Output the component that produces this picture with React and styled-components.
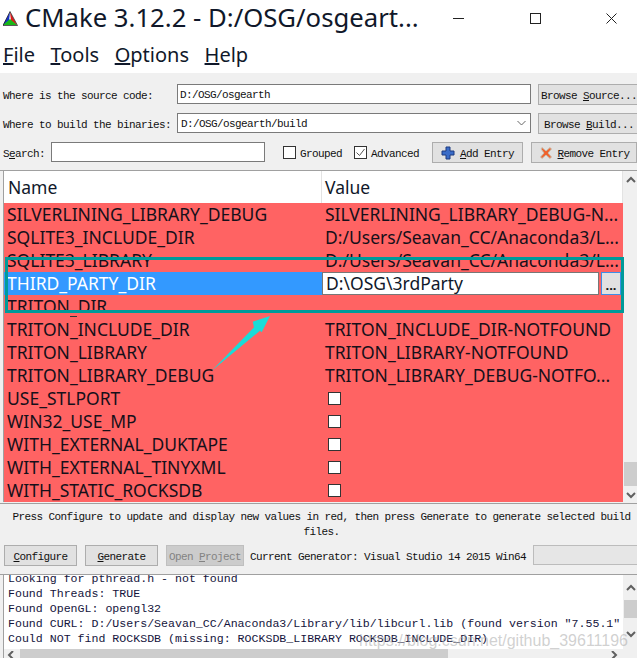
import React from 'react';
import styled, { createGlobalStyle } from 'styled-components';

const GlobalStyle = createGlobalStyle`
  html, body {
    margin: 0;
    padding: 0;
    background: #fff;
  }
  * { box-sizing: border-box; }
`;

const mono = '"Liberation Mono", "DejaVu Sans Mono", monospace';
const ui = '"Noto Sans", "Open Sans", sans-serif';
const RED = '#ff6363';

const Window = styled.div`
  position: relative;
  width: 637px;
  height: 658px;
  overflow: hidden;
  display: flex;
  flex-direction: column;
  background: #fff;
  font-family: ${mono};
  font-size: 11px;
  letter-spacing: -0.6px;
  color: #111;
  u { text-underline-offset: 1px; }
`;

const TitleBar = styled.div`
  height: 36px;
  display: flex;
  align-items: center;
  padding-left: 3px;
  flex-shrink: 0;
`;
const Title = styled.div`
  font-family: ${ui};
  font-size: 25.7px;
  letter-spacing: 0;
  line-height: 36px;
  margin-left: 7px;
  white-space: nowrap;
  color: #10182a;
`;
const Controls = styled.div`
  display: flex;
  margin-left: auto;
  margin-right: -13px;
  flex-shrink: 0;
`;
const Control = styled.div`
  width: 76.5px;
  height: 36px;
  display: flex;
  align-items: center;
  justify-content: center;
`;

const MenuBar = styled.div`
  height: 37px;
  display: flex;
  gap: 15.5px;
  padding: 0 0 0 3px;
  align-items: center;
  font-family: ${ui};
  font-size: 20px;
  letter-spacing: 0;
  color: #10182a;
  flex-shrink: 0;
`;

const TopPanel = styled.div`
  height: 97px;
  padding: 11px 0 0 3px;
  display: flex;
  flex-direction: column;
  gap: 9px;
  background: #f0f0f0;
  flex-shrink: 0;
`;
const Row = styled.div`
  display: flex;
  align-items: flex-start;
  height: 20px;
  width: 700px;
`;
const Label = styled.div`
  width: ${p => p.$w}px;
  padding-top: 2px;
  line-height: 20px;
  white-space: nowrap;
  flex-shrink: 0;
`;
const PathInput = styled.div`
  width: ${p => p.$w}px;
  height: 20px;
  background: #fff;
  border: 1px solid #7a7a7a;
  padding: 0 0 0 ${p => p.$pl || 2}px;
  line-height: 20px;
  position: relative;
  flex-shrink: 0;
`;
const Chevron = styled.svg`
  display: block;
  flex-shrink: 0;
`;
const ComboArrow = styled.div`
  position: absolute;
  right: 4px;
  top: 6px;
`;
const Button = styled.div`
  width: ${p => p.$w}px;
  height: 21px;
  margin-left: ${p => p.$ml || 0}px;
  background: ${p => (p.$disabled ? '#cccccc' : '#e1e1e1')};
  border: 1px solid ${p => (p.$disabled ? '#bfbfbf' : '#adadad')};
  color: ${p => (p.$disabled ? '#838383' : '#111')};
  display: flex;
  align-items: center;
  justify-content: center;
  gap: 5px;
  white-space: nowrap;
  flex-shrink: 0;
`;
const ButtonText = styled.span`
  padding-top: 3px;
`;
const CheckLabel = styled.div`
  display: flex;
  align-items: center;
  gap: 4px;
  height: 20px;
  margin-left: ${p => p.$ml}px;
  flex-shrink: 0;
`;
const Box = styled.div`
  width: 13px;
  height: 13px;
  background: #fff;
  border: 1px solid #333;
  display: flex;
  align-items: center;
  justify-content: center;
  flex-shrink: 0;
`;
const RowBox = styled(Box)`
  margin-left: 3px;
`;

const Table = styled.div`
  height: 334px;
  display: flex;
  background: #f0f0f0;
  border-top: 1px solid #a0a0a0;
  border-bottom: 1px solid #a0a0a0;
  flex-shrink: 0;
`;
const TableMain = styled.div`
  width: 620px;
  margin-left: 3px;
  border-left: 1px solid #a0a0a0;
  font-family: ${ui};
  font-size: 17.5px;
  letter-spacing: 0;
  color: #16101a;
  background: #fff;
  height: 331px;
`;
const Header = styled.div`
  height: 32px;
  display: grid;
  grid-template-columns: 318px 1fr;
  line-height: 32px;
  color: #10182a;
`;
const HeadCell = styled.div`
  padding-left: ${p => p.$pl}px;
  border-right: 1px solid #e3e3e3;
`;
const Rows = styled.div`
  background: ${RED};
  height: 299px;
`;
const TableRow = styled.div`
  position: relative;
  height: 23px;
  display: grid;
  grid-template-columns: 318px 1fr;
  line-height: 23px;
  background: ${p => (p.$selected ? 'linear-gradient(90deg, #3399ff 318px, transparent 318px)' : 'transparent')};
  color: ${p => (p.$selected ? '#fff' : 'inherit')};
`;
const NameCell = styled.div`
  padding-left: 3px;
  white-space: nowrap;
  overflow: hidden;
  height: ${p => p.$h || 23}px;
`;
const ValueCell = styled.div`
  padding-left: 3px;
  white-space: nowrap;
  overflow: hidden;
  display: flex;
  align-items: center;
`;
const ClippedDash = styled.div`
  position: absolute;
  left: 66px;
  top: 21px;
  width: 7px;
  height: 1px;
  background: #333;
`;
const Editor = styled.div`
  display: flex;
  height: 23px;
`;
const EditorInput = styled.div`
  width: 277px;
  background: #fff;
  border: 1px solid #777;
  padding-left: 3px;
  line-height: 21px;
  color: #10182a;
`;
const EditorButton = styled.div`
  width: 20px;
  margin-left: 2px;
  background: #e1e1e1;
  border: 1px solid #3d8fe8;
  font-size: 13px;
  font-weight: 700;
  line-height: 24px;
  text-align: center;
  color: #111;
`;
const VScroll = styled.div`
  flex: 1;
  margin-left: 1px;
  display: flex;
  flex-direction: column;
  align-items: stretch;
  height: ${p => p.$h}px;
`;
const ArrowCell = styled.div`
  height: ${p => p.$h}px;
  display: flex;
  align-items: center;
  justify-content: center;
  flex-shrink: 0;
`;
const Thumb = styled.div`
  height: ${p => p.$h}px;
  margin-top: auto;
  background: #cdcdcd;
  flex-shrink: 0;
`;

const Message = styled.div`
  height: 41px;
  padding: 6px 0 0 6px;
  text-align: center;
  line-height: 15px;
  background: #f0f0f0;
  flex-shrink: 0;
`;
const ActionBar = styled.div`
  height: 29px;
  display: flex;
  align-items: flex-start;
  padding-left: 4px;
  background: #f0f0f0;
  flex-shrink: 0;
  width: 700px;
`;
const GenLabel = styled.div`
  margin-left: 6px;
  width: 283px;
  padding-top: 2px;
  line-height: 21px;
  white-space: nowrap;
  flex-shrink: 0;
`;
const ProgressBox = styled.div`
  width: 120px;
  height: 20px;
  background: #e6e6e6;
  border: 1px solid #bcbcbc;
  flex-shrink: 0;
`;

const Output = styled.div`
  flex: 1;
  display: flex;
  flex-direction: column;
  background: #f0f0f0;
  border-top: 1px solid #a0a0a0;
  min-height: 0;
`;
const OutputTop = styled.div`
  height: 74px;
  display: flex;
  flex-shrink: 0;
`;
const LogBox = styled.div`
  width: 620px;
  margin-left: 3px;
  border-left: 1px solid #a0a0a0;
  background: #fff;
  overflow: hidden;
  padding-left: 4px;
  font-size: 11.6px;
  letter-spacing: 0;
  line-height: 15px;
  white-space: pre;
  color: #14143c;
`;
const LogLines = styled.div`
  margin-top: -4px;
`;
const HScroll = styled.div`
  height: 9px;
  display: flex;
  margin-left: 3px;
  border-left: 1px solid #a0a0a0;
  align-items: flex-start;
  overflow: hidden;
`;
const HEnd = styled.div`
  width: 16px;
  height: 9px;
  padding-top: 2px;
  display: flex;
  justify-content: center;
  flex-shrink: 0;
  margin-left: ${p => p.$ml || 0}px;
`;
const HThumb = styled.div`
  width: 428px;
  height: 9px;
  background: #cdcdcd;
`;

const Highlight = styled.div`
  position: absolute;
  left: 5px;
  top: 257px;
  width: 619px;
  height: 56px;
  border: 3px solid #009a9a;
  pointer-events: none;
`;
const Pointer = styled.svg`
  position: absolute;
  left: 205px;
  top: 310px;
`;
const Watermark = styled.div`
  position: absolute;
  right: 9px;
  bottom: 8px;
  font-family: "Liberation Sans", sans-serif;
  font-size: 16px;
  letter-spacing: 0;
  color: rgba(170, 170, 170, 0.55);
  white-space: nowrap;
`;

const entries = [
  ['SILVERLINING_LIBRARY_DEBUG', 'SILVERLINING_LIBRARY_DEBUG-N...'],
  ['SQLITE3_INCLUDE_DIR', 'D:/Users/Seavan_CC/Anaconda3/L...'],
  ['SQLITE3_LIBRARY', 'D:/Users/Seavan_CC/Anaconda3/L...'],
  ['THIRD_PARTY_DIR', 'D:\\OSG\\3rdParty', 'edit'],
  ['TRITON_DIR', '', 'clip'],
  ['TRITON_INCLUDE_DIR', 'TRITON_INCLUDE_DIR-NOTFOUND'],
  ['TRITON_LIBRARY', 'TRITON_LIBRARY-NOTFOUND'],
  ['TRITON_LIBRARY_DEBUG', 'TRITON_LIBRARY_DEBUG-NOTFO...'],
  ['USE_STLPORT', null],
  ['WIN32_USE_MP', null],
  ['WITH_EXTERNAL_DUKTAPE', null],
  ['WITH_EXTERNAL_TINYXML', null],
  ['WITH_STATIC_ROCKSDB', null],
];

const logLines = [
  'Looking for pthread.h - not found',
  'Found Threads: TRUE',
  'Found OpenGL: opengl32',
  'Found CURL: D:/Users/Seavan_CC/Anaconda3/Library/lib/libcurl.lib (found version "7.55.1"',
  'Could NOT find ROCKSDB (missing: ROCKSDB_LIBRARY ROCKSDB_INCLUDE_DIR)',
];

const ScrollArrow = ({ dir }) => {
  const points = {
    up: '1,6 5,2 9,6',
    down: '1,2 5,6 9,2',
    left: '6,0 2,4 6,8',
    right: '2,0 6,4 2,8',
  }[dir];
  return (
    <Chevron width="10" height="8" viewBox="0 0 10 8">
      <polyline points={points} fill="none" stroke="#606060" strokeWidth="2" />
    </Chevron>
  );
};

const CMakeLogo = () => (
  <svg width="15" height="15" viewBox="0 0 15 15">
    <polygon points="7,1 0,14 6,10" fill="#1630c8" />
    <polygon points="7,1 14,14 8,10" fill="#e01818" />
    <polygon points="7,8 0,14 14,14" fill="#18b818" />
    <polygon points="7,0.5 0,14.5 14.5,14.5" fill="none" stroke="#111" strokeWidth="0.7" />
  </svg>
);

const PlusIcon = () => (
  <svg width="14" height="14" viewBox="0 0 14 14">
    <path d="M5 1h4v4h4v4H9v4H5V9H1V5h4z" fill="#3a6cc8" stroke="#1c3a80" strokeWidth="1" />
  </svg>
);

const CrossIcon = () => (
  <svg width="14" height="14" viewBox="0 0 14 14">
    <path d="M2 3 3 1.500 7 5l4-3.500L12.500 3 9 7l3.500 4L11 12.500 7 9l-4 3.500L1.500 11 5 7z" fill="#f0602a" stroke="#c8c0b0" strokeWidth="1" />
  </svg>
);

const Check = () => (
  <svg width="11" height="11" viewBox="0 0 11 11">
    <polyline points="1.500,5.500 4.500,8.500 9.500,2" fill="none" stroke="#555" strokeWidth="1" />
  </svg>
);

const EntryRow = ({ name, value, mode }) => {
  if (mode === 'edit') {
    return (
      <TableRow $selected>
        <NameCell>{name}</NameCell>
        <Editor>
          <EditorInput>{value}</EditorInput>
          <EditorButton>...</EditorButton>
        </Editor>
      </TableRow>
    );
  }
  return (
    <TableRow>
      <NameCell $h={mode === 'clip' ? 17 : 23}>{name}</NameCell>
      {mode === 'clip' && <ClippedDash />}
      <ValueCell>
        {value === null ? <RowBox /> : value}
      </ValueCell>
    </TableRow>
  );
};

export default function App() {
  return (
    <Window>
      <GlobalStyle />
      <TitleBar>
        <CMakeLogo />
        <Title>CMake 3.12.2 - D:/OSG/osgeart...</Title>
        <Controls>
          <Control>
            <svg width="11" height="11" viewBox="0 0 11 11">
              <line x1="0" y1="5.500" x2="11" y2="5.500" stroke="#222" />
            </svg>
          </Control>
          <Control>
            <svg width="11" height="11" viewBox="0 0 11 11">
              <rect x="0.500" y="0.500" width="10" height="10" fill="none" stroke="#222" />
            </svg>
          </Control>
          <Control>
            <svg width="11" height="11" viewBox="0 0 11 11">
              <path d="M0.500 0.500 10.500 10.500M10.500 0.500 0.500 10.500" fill="none" stroke="#222" />
            </svg>
          </Control>
        </Controls>
      </TitleBar>

      <MenuBar>
        <span><u>F</u>ile</span>
        <span><u>T</u>ools</span>
        <span><u>O</u>ptions</span>
        <span><u>H</u>elp</span>
      </MenuBar>

      <TopPanel>
        <Row>
          <Label $w={174}>Where is the source code:</Label>
          <PathInput $w={354}>D:/OSG/osgearth</PathInput>
          <Button $w={102} $ml={7}><ButtonText>Browse <u>S</u>ource...</ButtonText></Button>
        </Row>
        <Row>
          <Label $w={174}>Where to build the binaries:</Label>
          <PathInput $w={354} $pl={3}>
            D:/OSG/osgearth/build
            <ComboArrow>
              <Chevron width="9" height="6" viewBox="0 0 9 6">
                <polyline points="0.500,1 4.500,5 8.500,1" fill="none" stroke="#666" />
              </Chevron>
            </ComboArrow>
          </PathInput>
          <Button $w={102} $ml={7}><ButtonText>Browse <u>B</u>uild...</ButtonText></Button>
        </Row>
        <Row>
          <Label $w={48}>S<u>e</u>arch:</Label>
          <PathInput $w={214} />
          <CheckLabel $ml={18}><Box /><ButtonText>Grouped</ButtonText></CheckLabel>
          <CheckLabel $ml={12}><Box><Check /></Box><ButtonText>Advanced</ButtonText></CheckLabel>
          <Button $w={91} $ml={13}><PlusIcon /><ButtonText><u>A</u>dd Entry</ButtonText></Button>
          <Button $w={106} $ml={8}><CrossIcon /><ButtonText><u>R</u>emove Entry</ButtonText></Button>
        </Row>
      </TopPanel>

      <Table>
        <TableMain>
          <Header>
            <HeadCell $pl={4}>Name</HeadCell>
            <HeadCell $pl={3}>Value</HeadCell>
          </Header>
          <Rows>
            {entries.map(([name, value, mode]) => (
              <EntryRow key={name} name={name} value={value} mode={mode} />
            ))}
          </Rows>
        </TableMain>
        <VScroll $h={332}>
          <ArrowCell $h={17}><ScrollArrow dir="up" /></ArrowCell>
          <Thumb $h={24} />
          <ArrowCell $h={17}><ScrollArrow dir="down" /></ArrowCell>
        </VScroll>
      </Table>

      <Message>
        Press Configure to update and display new values in red, then press Generate to generate selected build files.
      </Message>

      <ActionBar>
        <Button $w={73}><ButtonText><u>C</u>onfigure</ButtonText></Button>
        <Button $w={73} $ml={8}><ButtonText><u>G</u>enerate</ButtonText></Button>
        <Button $w={78} $ml={8} $disabled><ButtonText>Open <u>P</u>roject</ButtonText></Button>
        <GenLabel>Current Generator: Visual Studio 14 2015 Win64</GenLabel>
        <ProgressBox />
      </ActionBar>

      <Output>
        <OutputTop>
          <LogBox>
            <LogLines>
              {logLines.map(line => <div key={line}>{line}</div>)}
            </LogLines>
          </LogBox>
          <VScroll $h={74}>
            <ArrowCell $h={25}><ScrollArrow dir="up" /></ArrowCell>
            <Thumb $h={18} />
            <ArrowCell $h={31}><ScrollArrow dir="down" /></ArrowCell>
          </VScroll>
        </OutputTop>
        <HScroll>
          <HEnd><ScrollArrow dir="left" /></HEnd>
          <HThumb />
          <HEnd $ml={159}><ScrollArrow dir="right" /></HEnd>
        </HScroll>
      </Output>

      <Highlight />
      <Pointer width="70" height="65" viewBox="0 0 70 65">
        <polygon points="65,6 47.7,11.7 49,17.3 6.7,60.7 55,20.7 56.7,22.3" fill="#1adcd8" />
      </Pointer>
      <Watermark>https://blog.csdn.net/github_39611196</Watermark>
    </Window>
  );
}
